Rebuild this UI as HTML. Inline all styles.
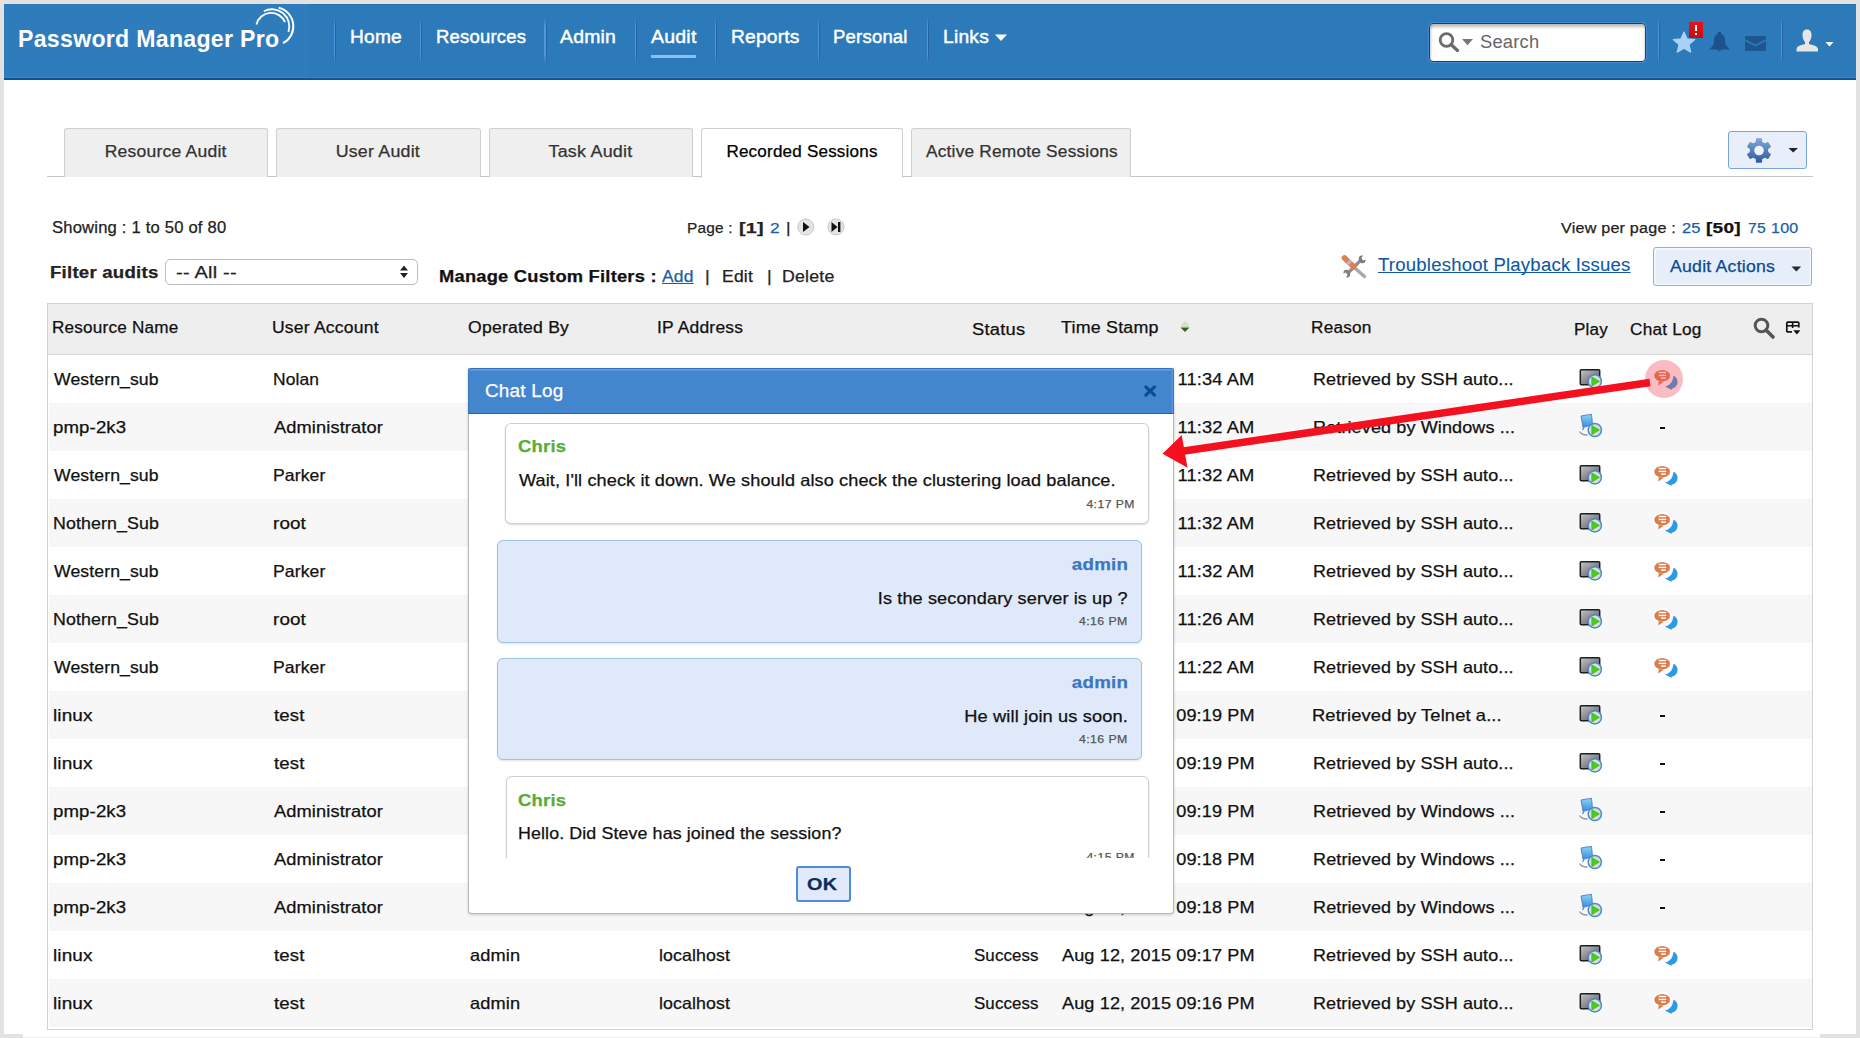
<!DOCTYPE html>
<html><head><meta charset="utf-8"><title>Password Manager Pro - Recorded Sessions</title>
<style>
html,body{margin:0;padding:0;width:1860px;height:1038px;overflow:hidden;position:relative;font-family:"Liberation Sans", sans-serif;}
div{-webkit-text-stroke:0.25px currentColor;}
</style></head><body>
<div style="position:absolute;left:0;top:0;width:1860px;height:1038px;background:#e2e2e2"></div>
<div style="position:absolute;left:4px;top:4px;width:1852px;height:1033px;background:#fff"></div><div style="position:absolute;left:0;top:1034px;width:23px;height:4px;background:#e2e2e2"></div><div style="position:absolute;left:1820px;top:1034px;width:40px;height:4px;background:#e2e2e2"></div><div style="position:absolute;left:23px;top:1037px;width:1797px;height:1px;background:#eeeeee"></div>
<div style="position:absolute;left:4px;top:4px;width:1852px;height:76px;background:#2c7ab9;border-top:1px solid #2470b0;box-sizing:border-box"></div>
<div style="position:absolute;left:4px;top:4px;width:305px;height:73px;background:#2f7cbd"></div>
<div style="position:absolute;left:4px;top:77px;width:1852px;height:1px;background:#3a84cf"></div>
<div style="position:absolute;left:4px;top:78px;width:1852px;height:2px;background:#0f5299"></div>
<svg style="position:absolute;left:245px;top:2px" width="60" height="50" viewBox="0 0 60 50">
<path d="M11.5 22.5 A 15 15 0 0 1 40 20.2" stroke="#fff" stroke-width="1.9" fill="none"/>
<path d="M18.8 9.3 A 17.3 17.3 0 0 1 43.4 30" stroke="#fff" stroke-width="1.8" fill="none"/>
<path d="M33.7 5.8 A 19 19 0 0 1 38 41.2" stroke="#fff" stroke-width="2" fill="none"/>
</svg>
<div style="position:absolute;left:333.5px;top:17px;width:1.5px;height:47px;background:linear-gradient(#2c7ab9,#4e96e2 22%,#4e96e2 78%,#2c7ab9)"></div>
<div style="position:absolute;left:335px;top:17px;width:1px;height:47px;background:linear-gradient(#2c7ab9,#23649e 22%,#23649e 78%,#2c7ab9)"></div>
<div style="position:absolute;left:419.5px;top:17px;width:1.5px;height:47px;background:linear-gradient(#2c7ab9,#4e96e2 22%,#4e96e2 78%,#2c7ab9)"></div>
<div style="position:absolute;left:421px;top:17px;width:1px;height:47px;background:linear-gradient(#2c7ab9,#23649e 22%,#23649e 78%,#2c7ab9)"></div>
<div style="position:absolute;left:544.0px;top:17px;width:1.5px;height:47px;background:linear-gradient(#2c7ab9,#4e96e2 22%,#4e96e2 78%,#2c7ab9)"></div>
<div style="position:absolute;left:545.5px;top:17px;width:1px;height:47px;background:linear-gradient(#2c7ab9,#23649e 22%,#23649e 78%,#2c7ab9)"></div>
<div style="position:absolute;left:634.5px;top:17px;width:1.5px;height:47px;background:linear-gradient(#2c7ab9,#4e96e2 22%,#4e96e2 78%,#2c7ab9)"></div>
<div style="position:absolute;left:636px;top:17px;width:1px;height:47px;background:linear-gradient(#2c7ab9,#23649e 22%,#23649e 78%,#2c7ab9)"></div>
<div style="position:absolute;left:714.5px;top:17px;width:1.5px;height:47px;background:linear-gradient(#2c7ab9,#4e96e2 22%,#4e96e2 78%,#2c7ab9)"></div>
<div style="position:absolute;left:716px;top:17px;width:1px;height:47px;background:linear-gradient(#2c7ab9,#23649e 22%,#23649e 78%,#2c7ab9)"></div>
<div style="position:absolute;left:817.5px;top:17px;width:1.5px;height:47px;background:linear-gradient(#2c7ab9,#4e96e2 22%,#4e96e2 78%,#2c7ab9)"></div>
<div style="position:absolute;left:819px;top:17px;width:1px;height:47px;background:linear-gradient(#2c7ab9,#23649e 22%,#23649e 78%,#2c7ab9)"></div>
<div style="position:absolute;left:926.5px;top:17px;width:1.5px;height:47px;background:linear-gradient(#2c7ab9,#4e96e2 22%,#4e96e2 78%,#2c7ab9)"></div>
<div style="position:absolute;left:928px;top:17px;width:1px;height:47px;background:linear-gradient(#2c7ab9,#23649e 22%,#23649e 78%,#2c7ab9)"></div>
<div style="position:absolute;left:651px;top:55px;width:45px;height:3px;background:#86bff0"></div>
<svg style="position:absolute;left:995px;top:34px" width="12" height="8"><path d="M0 0.5 L12 0.5 L6 7 Z" fill="#fff"/></svg>
<div style="position:absolute;left:1428.5px;top:22.5px;width:217.5px;height:39.5px;box-sizing:border-box;border:1.8px solid #15416e;border-radius:4px;background:#fff;box-shadow:inset 0 3px 3px rgba(0,0,0,0.26), inset 2px 0 2px rgba(0,0,0,0.06), 0 0 0 1px rgba(80,150,220,0.6)"></div>
<svg style="position:absolute;left:1436px;top:30px" width="40" height="22">
<circle cx="10.5" cy="10" r="6.3" stroke="#6a6a6a" stroke-width="2.8" fill="none"/>
<path d="M15 14.5 L21.5 20.5" stroke="#6a6a6a" stroke-width="3.2" stroke-linecap="round"/>
<path d="M26 9 L37 9 L31.5 15.3 Z" fill="#777"/>
</svg>
<div style="position:absolute;left:1657.5px;top:17px;width:1.5px;height:47px;background:linear-gradient(#2c7ab9,#4e96e2 22%,#4e96e2 78%,#2c7ab9)"></div>
<div style="position:absolute;left:1659px;top:17px;width:1px;height:47px;background:linear-gradient(#2c7ab9,#23649e 22%,#23649e 78%,#2c7ab9)"></div>
<div style="position:absolute;left:1780.5px;top:17px;width:1.5px;height:47px;background:linear-gradient(#2c7ab9,#4e96e2 22%,#4e96e2 78%,#2c7ab9)"></div>
<div style="position:absolute;left:1782px;top:17px;width:1px;height:47px;background:linear-gradient(#2c7ab9,#23649e 22%,#23649e 78%,#2c7ab9)"></div>
<svg style="position:absolute;left:1672px;top:31px" width="24" height="23" viewBox="0 0 24 23">
<path d="M12 1 L15.2 7.9 L22.8 8.6 L17 13.6 L18.8 21.2 L12 17.2 L5.2 21.2 L7 13.6 L1.2 8.6 L8.8 7.9 Z" fill="#a9d1f6" stroke="#a9d1f6" stroke-width="1.2" stroke-linejoin="round"/></svg>
<div style="position:absolute;left:1689px;top:22px;width:14px;height:16px;background:linear-gradient(#e8141a,#c40d0d)"></div>
<div style="position:absolute;left:1694.5px;top:25px;width:2.5px;height:6px;background:#fff"></div>
<div style="position:absolute;left:1694.5px;top:32.5px;width:2.5px;height:2px;background:#fff"></div>
<svg style="position:absolute;left:1708px;top:31px" width="23" height="21" viewBox="0 0 23 21">
<circle cx="11.5" cy="2.5" r="1.8" fill="#1a4f86"/>
<path d="M11.5 3 C 7 3, 6 6, 6 10 C 6 14, 4 16, 1 18.5 L22 18.5 C 19 16, 17 14, 17 10 C 17 6, 16 3, 11.5 3 Z" fill="#1c5289"/>
<path d="M9 18.5 L14 18.5 L11.5 20.5 Z" fill="#1c5289"/></svg>
<svg style="position:absolute;left:1745px;top:36px" width="21" height="15" viewBox="0 0 21 15">
<rect x="0" y="0" width="21" height="15" fill="#1f5690"/>
<path d="M0 4 L10.5 9.5 L21 4" stroke="#2c7ab9" stroke-width="1.6" fill="none"/></svg>
<svg style="position:absolute;left:1795px;top:28px" width="40" height="25" viewBox="0 0 40 25">
<path d="M12 1.5 C 8.5 1.5, 7.5 4, 7.5 7 C 7.5 10, 8.5 12.5, 10 14 L 10 16 C 6 17, 2 18, 1.5 21 L 1.5 23.5 L 23 23.5 L 23 21 C 22.5 18, 18 17, 14 16 L 14 14 C 15.5 12.5, 16.5 10, 16.5 7 C 16.5 4, 15.5 1.5, 12 1.5 Z" fill="#e6e6e6"/>
<path d="M30.5 14 L38.5 14 L34.5 18.5 Z" fill="#fff"/></svg>
<div style="position:absolute;left:47px;top:176px;width:1766px;height:1.2px;background:#c6c6c6"></div>
<div style="position:absolute;left:64px;top:128px;width:204px;height:49px;box-sizing:border-box;border:1px solid #cfcfcf;border-bottom:none;border-radius:3px 3px 0 0;background:#efefef"></div>
<div style="position:absolute;left:276px;top:128px;width:204.5px;height:49px;box-sizing:border-box;border:1px solid #cfcfcf;border-bottom:none;border-radius:3px 3px 0 0;background:#efefef"></div>
<div style="position:absolute;left:489px;top:128px;width:203.5px;height:49px;box-sizing:border-box;border:1px solid #cfcfcf;border-bottom:none;border-radius:3px 3px 0 0;background:#efefef"></div>
<div style="position:absolute;left:701px;top:128px;width:202px;height:50px;box-sizing:border-box;border:1px solid #cfcfcf;border-bottom:none;border-radius:3px 3px 0 0;background:#fff"></div>
<div style="position:absolute;left:911px;top:128px;width:220px;height:49px;box-sizing:border-box;border:1px solid #cfcfcf;border-bottom:none;border-radius:3px 3px 0 0;background:#efefef"></div>
<div style="position:absolute;left:1728px;top:131px;width:79px;height:38px;box-sizing:border-box;border:1px solid #78a6dc;border-radius:3px;background:#e8effa"></div>
<svg style="position:absolute;left:1745px;top:138px" width="56" height="26" viewBox="0 0 56 26">
<defs><linearGradient id="gg" x1="0" y1="0" x2="0" y2="1"><stop offset="0" stop-color="#7ea6d8"/><stop offset="1" stop-color="#2f5c9c"/></linearGradient></defs>
<path d="M11.49 4.28 L11.75 0.92 L16.25 0.92 L16.51 4.28 L19.87 6.21 L22.91 4.76 L25.16 8.66 L22.38 10.57 L22.38 14.43 L25.16 16.34 L22.91 20.24 L19.87 18.79 L16.51 20.72 L16.25 24.08 L11.75 24.08 L11.49 20.72 L8.13 18.79 L5.09 20.24 L2.84 16.34 L5.62 14.43 L5.62 10.57 L2.84 8.66 L5.09 4.76 L8.13 6.21 Z" fill="url(#gg)" stroke="url(#gg)" stroke-width="1.5" stroke-linejoin="round"/>
<circle cx="14" cy="12.5" r="4.8" fill="#eef3fb"/>
<path d="M43.5 10 L53 10 L48.2 14.6 Z" fill="#222"/></svg>
<div style="position:absolute;left:164.5px;top:259px;width:253px;height:25.5px;box-sizing:border-box;border:1px solid #bdbdbd;border-radius:5px;background:#fff"></div>
<svg style="position:absolute;left:399px;top:264px" width="10" height="16"><path d="M1 6.5 L5 1.5 L9 6.5 Z" fill="#222"/><path d="M1 9 L9 9 L5 14 Z" fill="#222"/></svg>
<svg style="position:absolute;left:795px;top:217px" width="52" height="20">
<circle cx="10.8" cy="10" r="8" fill="#e4e4e4" stroke="#c9c9c9" stroke-width="1"/>
<path d="M8 5 L14.5 10 L8 15 Z" fill="#111"/>
<circle cx="41" cy="10" r="8" fill="#e4e4e4" stroke="#c9c9c9" stroke-width="1"/>
<path d="M36.5 5 L42.5 10 L36.5 15 Z" fill="#111"/>
<rect x="43" y="5" width="2.4" height="10" fill="#111"/>
</svg>
<svg style="position:absolute;left:1336px;top:250px" width="36" height="34" viewBox="0 0 36 34">
<path d="M11.5 23.5 L25.5 9.5" stroke="#8f8f8f" stroke-width="3.2"/>
<path d="M23 10 C 22 7, 24 5, 27 5.5 L 25.5 8 L 27 10.5 L 29.5 9.5 C 30 12, 28 14, 25 13 Z" fill="#7c7c7c"/>
<path d="M14 23 C 15 26, 13 28, 10 27.5 L 11.5 25 L 10 22.5 L 7.5 23.5 C 7 21, 9 19, 12 20 Z" fill="#808080"/>
<path d="M17 16.5 L28.5 26.5" stroke="#a8a8a8" stroke-width="3.4" stroke-linecap="round"/>
<path d="M8.5 8 L17.5 16.5" stroke="#e27d52" stroke-width="5.6" stroke-linecap="round"/>
<path d="M11.8 11.2 L14.2 13.5" stroke="#b9b9b9" stroke-width="5.6"/>
</svg>
<div style="position:absolute;left:1652.5px;top:247px;width:159px;height:39px;box-sizing:border-box;border:1.3px solid #8cb1de;border-radius:3px;background:#e6eefa;box-shadow:inset 0 0 0 1.5px rgba(255,255,255,0.6)"></div>
<svg style="position:absolute;left:1791px;top:265.5px" width="12" height="7"><path d="M0.5 0.5 L10.2 0.5 L5.35 5.5 Z" fill="#2a2a2a"/></svg>
<div style="position:absolute;left:47px;top:302.5px;width:1766px;height:727px;box-sizing:border-box;border:1.5px solid #d3d3d3;background:#fff"></div>
<div style="position:absolute;left:48px;top:304px;width:1764px;height:50px;background:#eeeeee;border-bottom:1.5px solid #d6d6d6"></div>
<svg style="position:absolute;left:1178px;top:320px" width="14" height="16"><path d="M3 5.5 L11 5.5 L7 1 Z" fill="#d0e0c8"/><path d="M2.5 7.5 L11.5 7.5 L7 12 Z" fill="#3d5f1e"/><rect x="3" y="6.3" width="8" height="0.8" fill="#b7d2a3"/></svg>
<svg style="position:absolute;left:1750px;top:315px" width="50" height="26">
<circle cx="11.5" cy="10.5" r="6.3" stroke="#555" stroke-width="3" fill="none"/>
<path d="M16 15 L23 22" stroke="#555" stroke-width="3.6" stroke-linecap="round"/>
<path d="M36.8 17 L36.8 8.2 Q36.8 7.2 37.8 7.2 L47.8 7.2 Q48.8 7.2 48.8 8.2 L48.8 12.5" fill="none" stroke="#111" stroke-width="1.7"/>
<path d="M36.8 10.8 L48.8 10.8 M42.6 7.2 L42.6 13" stroke="#111" stroke-width="1.6"/>
<path d="M36.8 16.9 L42 16.9" stroke="#111" stroke-width="1.7"/>
<path d="M43.3 15.2 L50.5 15.2 L46.9 19.5 Z" fill="#111"/>
</svg>
<svg style="position:absolute;left:1578px;top:364px" width="26" height="26" viewBox="0 0 26 26">
<defs><linearGradient id="sg0" x1="0" y1="0" x2="1" y2="1"><stop offset="0" stop-color="#c8c8c8"/><stop offset="1" stop-color="#505050"/></linearGradient></defs>
<rect x="2.3" y="5.7" width="19.4" height="15" rx="1" fill="url(#sg0)" stroke="#1e1e1e" stroke-width="1.5"/>
<circle cx="16.8" cy="17.4" r="6.6" fill="#dcdcdc" stroke="#4a88d0" stroke-width="1.5"/>
<path d="M13.8 12.8 L21.4 17.4 L13.8 22 Z" fill="#43d11c" stroke="#2fa80f" stroke-width="0.6" stroke-linejoin="round"/></svg>
<svg style="position:absolute;left:1650px;top:364px" width="30" height="26" viewBox="0 0 30 26">
<path d="M23.5 11.8 C 28 13.5, 29 19.5, 25.5 22.8 C 24.5 23.8, 23 24.5, 21.5 24.8 L 21.8 26 L 15 22.6 C 18.5 21.8, 21.5 19.5, 22.3 16.5 C 22.8 15, 23.2 13.5, 23.5 11.8 Z" fill="#2b9be2"/>
<ellipse cx="12.2" cy="11.7" rx="8.8" ry="6.6" fill="#dc7d4d" stroke="#fff" stroke-width="1.8"/>
<path d="M8.8 17 L8.2 21.5 L13.8 17.8 Z" fill="#dc7d4d"/>
<rect x="8.7" y="7.8" width="7.4" height="1.4" fill="#fff"/><rect x="8.7" y="10.7" width="7.4" height="1.4" fill="#fff"/><rect x="11" y="13.4" width="4.8" height="1.4" fill="#fff"/>
</svg>
<div style="position:absolute;left:48.5px;top:403px;width:1763px;height:48px;background:#f7f7f7"></div>
<svg style="position:absolute;left:1578px;top:412px" width="26" height="26" viewBox="0 0 26 26">
<defs><linearGradient id="wg1" x1="0" y1="0" x2="0" y2="1"><stop offset="0" stop-color="#8cd0fa"/><stop offset="1" stop-color="#2e90e0"/></linearGradient></defs>
<path d="M3 4 L13.5 2.3 L14.5 12.5 L5 15.5 Z" fill="url(#wg1)" stroke="#4a7fc0" stroke-width="0.9"/>
<path d="M6 15.5 L4.5 18" stroke="#6a8fc0" stroke-width="1.4"/>
<path d="M1.8 19.5 C 2.5 22, 5.5 23, 9.5 23" stroke="#8a9ab0" stroke-width="1.3" fill="none"/>
<circle cx="16.8" cy="18" r="6.6" fill="#dcdcdc" stroke="#4a88d0" stroke-width="1.5"/>
<path d="M13.8 13.4 L21.4 18 L13.8 22.6 Z" fill="#43d11c" stroke="#2fa80f" stroke-width="0.6" stroke-linejoin="round"/></svg>
<div style="position:absolute;left:1659.7px;top:427px;width:5.8px;height:2px;background:#111"></div>
<svg style="position:absolute;left:1578px;top:460px" width="26" height="26" viewBox="0 0 26 26">
<defs><linearGradient id="sg2" x1="0" y1="0" x2="1" y2="1"><stop offset="0" stop-color="#c8c8c8"/><stop offset="1" stop-color="#505050"/></linearGradient></defs>
<rect x="2.3" y="5.7" width="19.4" height="15" rx="1" fill="url(#sg2)" stroke="#1e1e1e" stroke-width="1.5"/>
<circle cx="16.8" cy="17.4" r="6.6" fill="#dcdcdc" stroke="#4a88d0" stroke-width="1.5"/>
<path d="M13.8 12.8 L21.4 17.4 L13.8 22 Z" fill="#43d11c" stroke="#2fa80f" stroke-width="0.6" stroke-linejoin="round"/></svg>
<svg style="position:absolute;left:1650px;top:460px" width="30" height="26" viewBox="0 0 30 26">
<path d="M23.5 11.8 C 28 13.5, 29 19.5, 25.5 22.8 C 24.5 23.8, 23 24.5, 21.5 24.8 L 21.8 26 L 15 22.6 C 18.5 21.8, 21.5 19.5, 22.3 16.5 C 22.8 15, 23.2 13.5, 23.5 11.8 Z" fill="#2b9be2"/>
<ellipse cx="12.2" cy="11.7" rx="8.8" ry="6.6" fill="#dc7d4d" stroke="#fff" stroke-width="1.8"/>
<path d="M8.8 17 L8.2 21.5 L13.8 17.8 Z" fill="#dc7d4d"/>
<rect x="8.7" y="7.8" width="7.4" height="1.4" fill="#fff"/><rect x="8.7" y="10.7" width="7.4" height="1.4" fill="#fff"/><rect x="11" y="13.4" width="4.8" height="1.4" fill="#fff"/>
</svg>
<div style="position:absolute;left:48.5px;top:499px;width:1763px;height:48px;background:#f7f7f7"></div>
<svg style="position:absolute;left:1578px;top:508px" width="26" height="26" viewBox="0 0 26 26">
<defs><linearGradient id="sg3" x1="0" y1="0" x2="1" y2="1"><stop offset="0" stop-color="#c8c8c8"/><stop offset="1" stop-color="#505050"/></linearGradient></defs>
<rect x="2.3" y="5.7" width="19.4" height="15" rx="1" fill="url(#sg3)" stroke="#1e1e1e" stroke-width="1.5"/>
<circle cx="16.8" cy="17.4" r="6.6" fill="#dcdcdc" stroke="#4a88d0" stroke-width="1.5"/>
<path d="M13.8 12.8 L21.4 17.4 L13.8 22 Z" fill="#43d11c" stroke="#2fa80f" stroke-width="0.6" stroke-linejoin="round"/></svg>
<svg style="position:absolute;left:1650px;top:508px" width="30" height="26" viewBox="0 0 30 26">
<path d="M23.5 11.8 C 28 13.5, 29 19.5, 25.5 22.8 C 24.5 23.8, 23 24.5, 21.5 24.8 L 21.8 26 L 15 22.6 C 18.5 21.8, 21.5 19.5, 22.3 16.5 C 22.8 15, 23.2 13.5, 23.5 11.8 Z" fill="#2b9be2"/>
<ellipse cx="12.2" cy="11.7" rx="8.8" ry="6.6" fill="#dc7d4d" stroke="#fff" stroke-width="1.8"/>
<path d="M8.8 17 L8.2 21.5 L13.8 17.8 Z" fill="#dc7d4d"/>
<rect x="8.7" y="7.8" width="7.4" height="1.4" fill="#fff"/><rect x="8.7" y="10.7" width="7.4" height="1.4" fill="#fff"/><rect x="11" y="13.4" width="4.8" height="1.4" fill="#fff"/>
</svg>
<svg style="position:absolute;left:1578px;top:556px" width="26" height="26" viewBox="0 0 26 26">
<defs><linearGradient id="sg4" x1="0" y1="0" x2="1" y2="1"><stop offset="0" stop-color="#c8c8c8"/><stop offset="1" stop-color="#505050"/></linearGradient></defs>
<rect x="2.3" y="5.7" width="19.4" height="15" rx="1" fill="url(#sg4)" stroke="#1e1e1e" stroke-width="1.5"/>
<circle cx="16.8" cy="17.4" r="6.6" fill="#dcdcdc" stroke="#4a88d0" stroke-width="1.5"/>
<path d="M13.8 12.8 L21.4 17.4 L13.8 22 Z" fill="#43d11c" stroke="#2fa80f" stroke-width="0.6" stroke-linejoin="round"/></svg>
<svg style="position:absolute;left:1650px;top:556px" width="30" height="26" viewBox="0 0 30 26">
<path d="M23.5 11.8 C 28 13.5, 29 19.5, 25.5 22.8 C 24.5 23.8, 23 24.5, 21.5 24.8 L 21.8 26 L 15 22.6 C 18.5 21.8, 21.5 19.5, 22.3 16.5 C 22.8 15, 23.2 13.5, 23.5 11.8 Z" fill="#2b9be2"/>
<ellipse cx="12.2" cy="11.7" rx="8.8" ry="6.6" fill="#dc7d4d" stroke="#fff" stroke-width="1.8"/>
<path d="M8.8 17 L8.2 21.5 L13.8 17.8 Z" fill="#dc7d4d"/>
<rect x="8.7" y="7.8" width="7.4" height="1.4" fill="#fff"/><rect x="8.7" y="10.7" width="7.4" height="1.4" fill="#fff"/><rect x="11" y="13.4" width="4.8" height="1.4" fill="#fff"/>
</svg>
<div style="position:absolute;left:48.5px;top:595px;width:1763px;height:48px;background:#f7f7f7"></div>
<svg style="position:absolute;left:1578px;top:604px" width="26" height="26" viewBox="0 0 26 26">
<defs><linearGradient id="sg5" x1="0" y1="0" x2="1" y2="1"><stop offset="0" stop-color="#c8c8c8"/><stop offset="1" stop-color="#505050"/></linearGradient></defs>
<rect x="2.3" y="5.7" width="19.4" height="15" rx="1" fill="url(#sg5)" stroke="#1e1e1e" stroke-width="1.5"/>
<circle cx="16.8" cy="17.4" r="6.6" fill="#dcdcdc" stroke="#4a88d0" stroke-width="1.5"/>
<path d="M13.8 12.8 L21.4 17.4 L13.8 22 Z" fill="#43d11c" stroke="#2fa80f" stroke-width="0.6" stroke-linejoin="round"/></svg>
<svg style="position:absolute;left:1650px;top:604px" width="30" height="26" viewBox="0 0 30 26">
<path d="M23.5 11.8 C 28 13.5, 29 19.5, 25.5 22.8 C 24.5 23.8, 23 24.5, 21.5 24.8 L 21.8 26 L 15 22.6 C 18.5 21.8, 21.5 19.5, 22.3 16.5 C 22.8 15, 23.2 13.5, 23.5 11.8 Z" fill="#2b9be2"/>
<ellipse cx="12.2" cy="11.7" rx="8.8" ry="6.6" fill="#dc7d4d" stroke="#fff" stroke-width="1.8"/>
<path d="M8.8 17 L8.2 21.5 L13.8 17.8 Z" fill="#dc7d4d"/>
<rect x="8.7" y="7.8" width="7.4" height="1.4" fill="#fff"/><rect x="8.7" y="10.7" width="7.4" height="1.4" fill="#fff"/><rect x="11" y="13.4" width="4.8" height="1.4" fill="#fff"/>
</svg>
<svg style="position:absolute;left:1578px;top:652px" width="26" height="26" viewBox="0 0 26 26">
<defs><linearGradient id="sg6" x1="0" y1="0" x2="1" y2="1"><stop offset="0" stop-color="#c8c8c8"/><stop offset="1" stop-color="#505050"/></linearGradient></defs>
<rect x="2.3" y="5.7" width="19.4" height="15" rx="1" fill="url(#sg6)" stroke="#1e1e1e" stroke-width="1.5"/>
<circle cx="16.8" cy="17.4" r="6.6" fill="#dcdcdc" stroke="#4a88d0" stroke-width="1.5"/>
<path d="M13.8 12.8 L21.4 17.4 L13.8 22 Z" fill="#43d11c" stroke="#2fa80f" stroke-width="0.6" stroke-linejoin="round"/></svg>
<svg style="position:absolute;left:1650px;top:652px" width="30" height="26" viewBox="0 0 30 26">
<path d="M23.5 11.8 C 28 13.5, 29 19.5, 25.5 22.8 C 24.5 23.8, 23 24.5, 21.5 24.8 L 21.8 26 L 15 22.6 C 18.5 21.8, 21.5 19.5, 22.3 16.5 C 22.8 15, 23.2 13.5, 23.5 11.8 Z" fill="#2b9be2"/>
<ellipse cx="12.2" cy="11.7" rx="8.8" ry="6.6" fill="#dc7d4d" stroke="#fff" stroke-width="1.8"/>
<path d="M8.8 17 L8.2 21.5 L13.8 17.8 Z" fill="#dc7d4d"/>
<rect x="8.7" y="7.8" width="7.4" height="1.4" fill="#fff"/><rect x="8.7" y="10.7" width="7.4" height="1.4" fill="#fff"/><rect x="11" y="13.4" width="4.8" height="1.4" fill="#fff"/>
</svg>
<div style="position:absolute;left:48.5px;top:691px;width:1763px;height:48px;background:#f7f7f7"></div>
<svg style="position:absolute;left:1578px;top:700px" width="26" height="26" viewBox="0 0 26 26">
<defs><linearGradient id="sg7" x1="0" y1="0" x2="1" y2="1"><stop offset="0" stop-color="#c8c8c8"/><stop offset="1" stop-color="#505050"/></linearGradient></defs>
<rect x="2.3" y="5.7" width="19.4" height="15" rx="1" fill="url(#sg7)" stroke="#1e1e1e" stroke-width="1.5"/>
<circle cx="16.8" cy="17.4" r="6.6" fill="#dcdcdc" stroke="#4a88d0" stroke-width="1.5"/>
<path d="M13.8 12.8 L21.4 17.4 L13.8 22 Z" fill="#43d11c" stroke="#2fa80f" stroke-width="0.6" stroke-linejoin="round"/></svg>
<div style="position:absolute;left:1659.7px;top:715px;width:5.8px;height:2px;background:#111"></div>
<svg style="position:absolute;left:1578px;top:748px" width="26" height="26" viewBox="0 0 26 26">
<defs><linearGradient id="sg8" x1="0" y1="0" x2="1" y2="1"><stop offset="0" stop-color="#c8c8c8"/><stop offset="1" stop-color="#505050"/></linearGradient></defs>
<rect x="2.3" y="5.7" width="19.4" height="15" rx="1" fill="url(#sg8)" stroke="#1e1e1e" stroke-width="1.5"/>
<circle cx="16.8" cy="17.4" r="6.6" fill="#dcdcdc" stroke="#4a88d0" stroke-width="1.5"/>
<path d="M13.8 12.8 L21.4 17.4 L13.8 22 Z" fill="#43d11c" stroke="#2fa80f" stroke-width="0.6" stroke-linejoin="round"/></svg>
<div style="position:absolute;left:1659.7px;top:763px;width:5.8px;height:2px;background:#111"></div>
<div style="position:absolute;left:48.5px;top:787px;width:1763px;height:48px;background:#f7f7f7"></div>
<svg style="position:absolute;left:1578px;top:796px" width="26" height="26" viewBox="0 0 26 26">
<defs><linearGradient id="wg9" x1="0" y1="0" x2="0" y2="1"><stop offset="0" stop-color="#8cd0fa"/><stop offset="1" stop-color="#2e90e0"/></linearGradient></defs>
<path d="M3 4 L13.5 2.3 L14.5 12.5 L5 15.5 Z" fill="url(#wg9)" stroke="#4a7fc0" stroke-width="0.9"/>
<path d="M6 15.5 L4.5 18" stroke="#6a8fc0" stroke-width="1.4"/>
<path d="M1.8 19.5 C 2.5 22, 5.5 23, 9.5 23" stroke="#8a9ab0" stroke-width="1.3" fill="none"/>
<circle cx="16.8" cy="18" r="6.6" fill="#dcdcdc" stroke="#4a88d0" stroke-width="1.5"/>
<path d="M13.8 13.4 L21.4 18 L13.8 22.6 Z" fill="#43d11c" stroke="#2fa80f" stroke-width="0.6" stroke-linejoin="round"/></svg>
<div style="position:absolute;left:1659.7px;top:811px;width:5.8px;height:2px;background:#111"></div>
<svg style="position:absolute;left:1578px;top:844px" width="26" height="26" viewBox="0 0 26 26">
<defs><linearGradient id="wg10" x1="0" y1="0" x2="0" y2="1"><stop offset="0" stop-color="#8cd0fa"/><stop offset="1" stop-color="#2e90e0"/></linearGradient></defs>
<path d="M3 4 L13.5 2.3 L14.5 12.5 L5 15.5 Z" fill="url(#wg10)" stroke="#4a7fc0" stroke-width="0.9"/>
<path d="M6 15.5 L4.5 18" stroke="#6a8fc0" stroke-width="1.4"/>
<path d="M1.8 19.5 C 2.5 22, 5.5 23, 9.5 23" stroke="#8a9ab0" stroke-width="1.3" fill="none"/>
<circle cx="16.8" cy="18" r="6.6" fill="#dcdcdc" stroke="#4a88d0" stroke-width="1.5"/>
<path d="M13.8 13.4 L21.4 18 L13.8 22.6 Z" fill="#43d11c" stroke="#2fa80f" stroke-width="0.6" stroke-linejoin="round"/></svg>
<div style="position:absolute;left:1659.7px;top:859px;width:5.8px;height:2px;background:#111"></div>
<div style="position:absolute;left:48.5px;top:883px;width:1763px;height:48px;background:#f7f7f7"></div>
<svg style="position:absolute;left:1578px;top:892px" width="26" height="26" viewBox="0 0 26 26">
<defs><linearGradient id="wg11" x1="0" y1="0" x2="0" y2="1"><stop offset="0" stop-color="#8cd0fa"/><stop offset="1" stop-color="#2e90e0"/></linearGradient></defs>
<path d="M3 4 L13.5 2.3 L14.5 12.5 L5 15.5 Z" fill="url(#wg11)" stroke="#4a7fc0" stroke-width="0.9"/>
<path d="M6 15.5 L4.5 18" stroke="#6a8fc0" stroke-width="1.4"/>
<path d="M1.8 19.5 C 2.5 22, 5.5 23, 9.5 23" stroke="#8a9ab0" stroke-width="1.3" fill="none"/>
<circle cx="16.8" cy="18" r="6.6" fill="#dcdcdc" stroke="#4a88d0" stroke-width="1.5"/>
<path d="M13.8 13.4 L21.4 18 L13.8 22.6 Z" fill="#43d11c" stroke="#2fa80f" stroke-width="0.6" stroke-linejoin="round"/></svg>
<div style="position:absolute;left:1659.7px;top:907px;width:5.8px;height:2px;background:#111"></div>
<svg style="position:absolute;left:1578px;top:940px" width="26" height="26" viewBox="0 0 26 26">
<defs><linearGradient id="sg12" x1="0" y1="0" x2="1" y2="1"><stop offset="0" stop-color="#c8c8c8"/><stop offset="1" stop-color="#505050"/></linearGradient></defs>
<rect x="2.3" y="5.7" width="19.4" height="15" rx="1" fill="url(#sg12)" stroke="#1e1e1e" stroke-width="1.5"/>
<circle cx="16.8" cy="17.4" r="6.6" fill="#dcdcdc" stroke="#4a88d0" stroke-width="1.5"/>
<path d="M13.8 12.8 L21.4 17.4 L13.8 22 Z" fill="#43d11c" stroke="#2fa80f" stroke-width="0.6" stroke-linejoin="round"/></svg>
<svg style="position:absolute;left:1650px;top:940px" width="30" height="26" viewBox="0 0 30 26">
<path d="M23.5 11.8 C 28 13.5, 29 19.5, 25.5 22.8 C 24.5 23.8, 23 24.5, 21.5 24.8 L 21.8 26 L 15 22.6 C 18.5 21.8, 21.5 19.5, 22.3 16.5 C 22.8 15, 23.2 13.5, 23.5 11.8 Z" fill="#2b9be2"/>
<ellipse cx="12.2" cy="11.7" rx="8.8" ry="6.6" fill="#dc7d4d" stroke="#fff" stroke-width="1.8"/>
<path d="M8.8 17 L8.2 21.5 L13.8 17.8 Z" fill="#dc7d4d"/>
<rect x="8.7" y="7.8" width="7.4" height="1.4" fill="#fff"/><rect x="8.7" y="10.7" width="7.4" height="1.4" fill="#fff"/><rect x="11" y="13.4" width="4.8" height="1.4" fill="#fff"/>
</svg>
<div style="position:absolute;left:48.5px;top:979px;width:1763px;height:48px;background:#f7f7f7"></div>
<svg style="position:absolute;left:1578px;top:988px" width="26" height="26" viewBox="0 0 26 26">
<defs><linearGradient id="sg13" x1="0" y1="0" x2="1" y2="1"><stop offset="0" stop-color="#c8c8c8"/><stop offset="1" stop-color="#505050"/></linearGradient></defs>
<rect x="2.3" y="5.7" width="19.4" height="15" rx="1" fill="url(#sg13)" stroke="#1e1e1e" stroke-width="1.5"/>
<circle cx="16.8" cy="17.4" r="6.6" fill="#dcdcdc" stroke="#4a88d0" stroke-width="1.5"/>
<path d="M13.8 12.8 L21.4 17.4 L13.8 22 Z" fill="#43d11c" stroke="#2fa80f" stroke-width="0.6" stroke-linejoin="round"/></svg>
<svg style="position:absolute;left:1650px;top:988px" width="30" height="26" viewBox="0 0 30 26">
<path d="M23.5 11.8 C 28 13.5, 29 19.5, 25.5 22.8 C 24.5 23.8, 23 24.5, 21.5 24.8 L 21.8 26 L 15 22.6 C 18.5 21.8, 21.5 19.5, 22.3 16.5 C 22.8 15, 23.2 13.5, 23.5 11.8 Z" fill="#2b9be2"/>
<ellipse cx="12.2" cy="11.7" rx="8.8" ry="6.6" fill="#dc7d4d" stroke="#fff" stroke-width="1.8"/>
<path d="M8.8 17 L8.2 21.5 L13.8 17.8 Z" fill="#dc7d4d"/>
<rect x="8.7" y="7.8" width="7.4" height="1.4" fill="#fff"/><rect x="8.7" y="10.7" width="7.4" height="1.4" fill="#fff"/><rect x="11" y="13.4" width="4.8" height="1.4" fill="#fff"/>
</svg>
<div style="position:absolute;left:1645px;top:360px;width:38px;height:38px;border-radius:50%;background:rgba(240,60,80,0.35);z-index:6"></div>
<div style="position:absolute;left:468px;top:368px;width:706px;height:545.5px;box-sizing:border-box;border:1.5px solid #b9b9b9;border-top:none;border-radius:0 0 4px 4px;background:#fff;box-shadow:0 1px 3px rgba(0,0,0,0.18);z-index:10"></div>
<div style="position:absolute;left:468px;top:368px;width:706px;height:45.5px;box-sizing:border-box;background:#4386cd;border-top:1.2px solid #3570b6;border-bottom:1.5px solid #2a62a6;border-left:1px solid #3b78c0;border-right:1px solid #3b78c0;border-radius:3px 3px 0 0;box-shadow:inset 0 1.5px 0 #62a0e6, inset -1.5px 0 0 #5596dc;z-index:11"></div>
<svg style="position:absolute;left:1143px;top:384px;z-index:12" width="14" height="14"><path d="M2.8 2.8 L11.5 11.2 M11.5 2.8 L2.8 11.2" stroke="#0e4a8e" stroke-width="3" stroke-linecap="round"/></svg>
<div style="position:absolute;left:470px;top:414px;width:702px;height:444px;overflow:hidden;z-index:12"><div style="position:absolute;left:35px;top:8.5px;width:643.5px;height:101.5px;box-sizing:border-box;border:1px solid #cfcfcf;border-radius:6px;background:#fff;box-shadow:0 1px 2px rgba(0,0,0,0.15)"></div><div style="position:absolute;left:27px;top:126px;width:644.5px;height:102.5px;box-sizing:border-box;border:1.3px solid #9fc0e8;border-radius:6px;background:#dfe9fa;box-shadow:0 1px 2px rgba(0,0,0,0.12)"></div><div style="position:absolute;left:27px;top:243.5px;width:644.5px;height:102.5px;box-sizing:border-box;border:1.3px solid #9fc0e8;border-radius:6px;background:#dfe9fa;box-shadow:0 1px 2px rgba(0,0,0,0.12)"></div><div style="position:absolute;left:35.5px;top:362px;width:643px;height:102px;box-sizing:border-box;border:1px solid #cfcfcf;border-radius:6px;background:#fff;box-shadow:0 1px 2px rgba(0,0,0,0.15)"></div><div style="position:absolute;left:47.85px;top:25.00px;width:41.91px;font-size:16px;line-height:16px;font-weight:700;color:#57ad38;letter-spacing:0.200px;white-space:nowrap;z-index:1;transform:scaleX(1.1500);transform-origin:left;">Chris</div><div style="position:absolute;left:49.00px;top:58.00px;width:543.52px;font-size:16.5px;line-height:16.5px;font-weight:400;color:#111;letter-spacing:0.100px;white-space:nowrap;z-index:1;transform:scaleX(1.0978);transform-origin:left;">Wait, I&#x27;ll check it down. We should also check the clustering load balance.</div><div style="position:absolute;left:621.48px;top:85.00px;width:43.77px;font-size:11px;line-height:11px;font-weight:400;color:#555;letter-spacing:0.400px;white-space:nowrap;z-index:1;transform:scaleX(1.1047);transform-origin:right;">4:17 PM</div><div style="position:absolute;left:609.89px;top:143.00px;width:48.12px;font-size:16px;line-height:16px;font-weight:700;color:#3a77c0;letter-spacing:0.200px;white-space:nowrap;z-index:1;transform:scaleX(1.1702);transform-origin:right;">admin</div><div style="position:absolute;left:430.08px;top:176.00px;width:227.80px;font-size:16.5px;line-height:16.5px;font-weight:400;color:#111;letter-spacing:0.100px;white-space:nowrap;z-index:1;transform:scaleX(1.0973);transform-origin:right;">Is the secondary server is up ?</div><div style="position:absolute;left:613.79px;top:202.00px;width:43.77px;font-size:11px;line-height:11px;font-weight:400;color:#555;letter-spacing:0.400px;white-space:nowrap;z-index:1;transform:scaleX(1.1163);transform-origin:right;">4:16 PM</div><div style="position:absolute;left:609.89px;top:261.00px;width:48.12px;font-size:16px;line-height:16px;font-weight:700;color:#3a77c0;letter-spacing:0.200px;white-space:nowrap;z-index:1;transform:scaleX(1.1702);transform-origin:right;">admin</div><div style="position:absolute;left:509.80px;top:294.00px;width:147.92px;font-size:16.5px;line-height:16.5px;font-weight:400;color:#111;letter-spacing:0.100px;white-space:nowrap;z-index:1;transform:scaleX(1.1062);transform-origin:right;">He will join us soon.</div><div style="position:absolute;left:613.79px;top:320.00px;width:43.77px;font-size:11px;line-height:11px;font-weight:400;color:#555;letter-spacing:0.400px;white-space:nowrap;z-index:1;transform:scaleX(1.1163);transform-origin:right;">4:16 PM</div><div style="position:absolute;left:47.85px;top:379.00px;width:41.91px;font-size:16px;line-height:16px;font-weight:700;color:#57ad38;letter-spacing:0.200px;white-space:nowrap;z-index:1;transform:scaleX(1.1500);transform-origin:left;">Chris</div><div style="position:absolute;left:47.92px;top:411.00px;width:299.34px;font-size:16.5px;line-height:16.5px;font-weight:400;color:#111;letter-spacing:0.100px;white-space:nowrap;z-index:1;transform:scaleX(1.0805);transform-origin:left;">Hello. Did Steve has joined the session?</div><div style="position:absolute;left:621.48px;top:438.00px;width:43.77px;font-size:11px;line-height:11px;font-weight:400;color:#555;letter-spacing:0.400px;white-space:nowrap;z-index:1;transform:scaleX(1.1047);transform-origin:right;">4:15 PM</div></div>
<div style="position:absolute;left:795.5px;top:865.5px;width:55px;height:36px;box-sizing:border-box;border:2px solid #4f8bd6;border-radius:3px;background:#e0eafa;z-index:12"></div>
<svg style="position:absolute;left:0;top:0;z-index:20" width="1860" height="1038">
<path d="M1650 382.5 L1184 451" stroke="#f4101e" stroke-width="7.5" fill="none"/>
<path d="M1162.5 453.8 L1181.7 435 L1187.5 467.7 Z" fill="#f4101e"/>
</svg>
<div style="position:absolute;left:17.72px;top:28.00px;width:265.89px;font-size:23.5px;line-height:23.5px;font-weight:700;color:#fff;letter-spacing:0.300px;white-space:nowrap;z-index:1;transform:scaleX(0.9830);transform-origin:left;-webkit-text-stroke:0">Password Manager Pro</div>
<div style="position:absolute;left:350.24px;top:28.00px;width:48.83px;font-size:18px;line-height:18px;font-weight:400;color:#fff;letter-spacing:0.200px;white-space:nowrap;z-index:1;transform:scaleX(1.0638);transform-origin:left;-webkit-text-stroke:0.45px #fff">Home</div>
<div style="position:absolute;left:436.27px;top:28.00px;width:87.84px;font-size:18px;line-height:18px;font-weight:400;color:#fff;letter-spacing:0.200px;white-space:nowrap;z-index:1;transform:scaleX(1.0256);transform-origin:left;-webkit-text-stroke:0.45px #fff">Resources</div>
<div style="position:absolute;left:560.30px;top:28.00px;width:52.03px;font-size:18px;line-height:18px;font-weight:400;color:#fff;letter-spacing:0.200px;white-space:nowrap;z-index:1;transform:scaleX(1.0784);transform-origin:left;-webkit-text-stroke:0.45px #fff">Admin</div>
<div style="position:absolute;left:651.10px;top:28.00px;width:42.03px;font-size:18px;line-height:18px;font-weight:400;color:#fff;letter-spacing:0.200px;white-space:nowrap;z-index:1;transform:scaleX(1.0833);transform-origin:left;-webkit-text-stroke:0.45px #fff">Audit</div>
<div style="position:absolute;left:730.53px;top:28.00px;width:64.44px;font-size:18px;line-height:18px;font-weight:400;color:#fff;letter-spacing:0.200px;white-space:nowrap;z-index:1;transform:scaleX(1.0651);transform-origin:left;-webkit-text-stroke:0.45px #fff">Reports</div>
<div style="position:absolute;left:833.27px;top:28.00px;width:72.66px;font-size:18px;line-height:18px;font-weight:400;color:#fff;letter-spacing:0.200px;white-space:nowrap;z-index:1;transform:scaleX(1.0282);transform-origin:left;-webkit-text-stroke:0.45px #fff">Personal</div>
<div style="position:absolute;left:943.23px;top:28.00px;width:43.03px;font-size:18px;line-height:18px;font-weight:400;color:#fff;letter-spacing:0.200px;white-space:nowrap;z-index:1;transform:scaleX(1.0683);transform-origin:left;-webkit-text-stroke:0.45px #fff">Links</div>
<div style="position:absolute;left:1479.58px;top:33.00px;width:58.23px;font-size:18px;line-height:18px;font-weight:400;color:#666;letter-spacing:0.200px;white-space:nowrap;z-index:1;transform:scaleX(1.0179);transform-origin:left;-webkit-text-stroke:0">Search</div>
<div style="position:absolute;left:110.00px;top:144.00px;width:111.31px;font-size:16px;line-height:16px;font-weight:400;color:#333;letter-spacing:0.200px;white-space:nowrap;z-index:1;transform:scaleX(1.0955);transform-origin:56.00px 50%;">Resource Audit</div>
<div style="position:absolute;left:339.75px;top:144.00px;width:75.81px;font-size:16px;line-height:16px;font-weight:400;color:#333;letter-spacing:0.200px;white-space:nowrap;z-index:1;transform:scaleX(1.1133);transform-origin:38.50px 50%;">User Audit</div>
<div style="position:absolute;left:553.25px;top:144.00px;width:74.94px;font-size:16px;line-height:16px;font-weight:400;color:#333;letter-spacing:0.200px;white-space:nowrap;z-index:1;transform:scaleX(1.1200);transform-origin:37.50px 50%;">Task Audit</div>
<div style="position:absolute;left:730.50px;top:144.00px;width:142.16px;font-size:16px;line-height:16px;font-weight:400;color:#000;letter-spacing:0.200px;white-space:nowrap;z-index:1;transform:scaleX(1.0638);transform-origin:71.50px 50%;">Recorded Sessions</div>
<div style="position:absolute;left:932.50px;top:144.00px;width:177.81px;font-size:16px;line-height:16px;font-weight:400;color:#333;letter-spacing:0.200px;white-space:nowrap;z-index:1;transform:scaleX(1.0791);transform-origin:88.50px 50%;">Active Remote Sessions</div>
<div style="position:absolute;left:52.46px;top:220.00px;width:168.28px;font-size:16px;line-height:16px;font-weight:400;color:#222;letter-spacing:0.200px;white-space:nowrap;z-index:1;transform:scaleX(1.0359);transform-origin:left;">Showing : 1 to 50 of 80</div>
<div style="position:absolute;left:49.84px;top:265.00px;width:93.28px;font-size:16px;line-height:16px;font-weight:700;color:#222;letter-spacing:0.200px;white-space:nowrap;z-index:1;transform:scaleX(1.1630);transform-origin:left;">Filter audits</div>
<div style="position:absolute;left:176.46px;top:265.00px;width:48.91px;font-size:16px;line-height:16px;font-weight:400;color:#222;letter-spacing:0.200px;white-space:nowrap;z-index:1;transform:scaleX(1.2447);transform-origin:left;">-- All --</div>
<div style="position:absolute;left:439.46px;top:269.00px;width:190.41px;font-size:16px;line-height:16px;font-weight:700;color:#111;letter-spacing:0.200px;white-space:nowrap;z-index:1;transform:scaleX(1.1436);transform-origin:left;">Manage Custom Filters :</div>
<div style="position:absolute;left:662.00px;top:269.00px;width:29.08px;font-size:16px;line-height:16px;font-weight:400;color:#1a5ea8;letter-spacing:0.200px;white-space:nowrap;z-index:1;transform:scaleX(1.0893);transform-origin:left;text-decoration:underline;text-decoration-skip-ink:none">Add</div>
<div style="position:absolute;left:705.38px;top:269.00px;width:4.36px;font-size:16px;line-height:16px;font-weight:400;color:#222;letter-spacing:0.200px;white-space:nowrap;z-index:1;transform:scaleX(1.1200);transform-origin:left;">|</div>
<div style="position:absolute;left:722.41px;top:269.00px;width:28.38px;font-size:16px;line-height:16px;font-weight:400;color:#222;letter-spacing:0.200px;white-space:nowrap;z-index:1;transform:scaleX(1.0926);transform-origin:left;">Edit</div>
<div style="position:absolute;left:766.88px;top:269.00px;width:4.36px;font-size:16px;line-height:16px;font-weight:400;color:#222;letter-spacing:0.200px;white-space:nowrap;z-index:1;transform:scaleX(1.1200);transform-origin:left;">|</div>
<div style="position:absolute;left:782.39px;top:269.00px;width:47.45px;font-size:16px;line-height:16px;font-weight:400;color:#222;letter-spacing:0.200px;white-space:nowrap;z-index:1;transform:scaleX(1.1087);transform-origin:left;">Delete</div>
<div style="position:absolute;left:687.01px;top:220.00px;width:46.02px;font-size:15.5px;line-height:15.5px;font-weight:400;color:#222;letter-spacing:0.200px;white-space:nowrap;z-index:1;transform:scaleX(0.9909);transform-origin:left;">Page :</div>
<div style="position:absolute;left:738.73px;top:220.00px;width:19.55px;font-size:15.5px;line-height:15.5px;font-weight:700;color:#222;letter-spacing:0.200px;white-space:nowrap;z-index:1;transform:scaleX(1.2722);transform-origin:left;">[1]</div>
<div style="position:absolute;left:769.88px;top:220.00px;width:8.83px;font-size:15.5px;line-height:15.5px;font-weight:400;color:#1a5ea8;letter-spacing:0.200px;white-space:nowrap;z-index:1;transform:scaleX(1.1200);transform-origin:left;">2</div>
<div style="position:absolute;left:785.88px;top:220.00px;width:4.23px;font-size:15.5px;line-height:15.5px;font-weight:400;color:#222;letter-spacing:0.200px;white-space:nowrap;z-index:1;transform:scaleX(1.1200);transform-origin:left;">|</div>
<div style="position:absolute;left:1561.30px;top:220.00px;width:110.44px;font-size:15.5px;line-height:15.5px;font-weight:400;color:#222;letter-spacing:0.200px;white-space:nowrap;z-index:1;transform:scaleX(1.0413);transform-origin:left;">View per page :</div>
<div style="position:absolute;left:1681.74px;top:220.00px;width:17.66px;font-size:15.5px;line-height:15.5px;font-weight:400;color:#1a5ea8;letter-spacing:0.200px;white-space:nowrap;z-index:1;transform:scaleX(1.0625);transform-origin:left;">25</div>
<div style="position:absolute;left:1705.97px;top:220.00px;width:28.38px;font-size:15.5px;line-height:15.5px;font-weight:700;color:#111;letter-spacing:0.200px;white-space:nowrap;z-index:1;transform:scaleX(1.2296);transform-origin:left;">[50]</div>
<div style="position:absolute;left:1747.59px;top:220.00px;width:17.66px;font-size:15.5px;line-height:15.5px;font-weight:400;color:#1a5ea8;letter-spacing:0.200px;white-space:nowrap;z-index:1;transform:scaleX(1.0125);transform-origin:left;">75</div>
<div style="position:absolute;left:1770.96px;top:220.00px;width:26.47px;font-size:15.5px;line-height:15.5px;font-weight:400;color:#1a5ea8;letter-spacing:0.200px;white-space:nowrap;z-index:1;transform:scaleX(1.0360);transform-origin:left;">100</div>
<div style="position:absolute;left:1378.40px;top:256.00px;width:245.06px;font-size:18px;line-height:18px;font-weight:400;color:#0f58a4;letter-spacing:0.200px;white-space:nowrap;z-index:1;transform:scaleX(1.0307);transform-origin:left;text-decoration:underline;text-decoration-skip-ink:none;-webkit-text-stroke:0.1px #0f58a4">Troubleshoot Playback Issues</div>
<div style="position:absolute;left:1670.00px;top:259.00px;width:95.11px;font-size:16px;line-height:16px;font-weight:400;color:#0c4a92;letter-spacing:0.200px;white-space:nowrap;z-index:1;transform:scaleX(1.1053);transform-origin:left;">Audit Actions</div>
<div style="position:absolute;left:51.83px;top:320.00px;width:118.20px;font-size:16px;line-height:16px;font-weight:400;color:#111;letter-spacing:0.200px;white-space:nowrap;z-index:1;transform:scaleX(1.0690);transform-origin:left;">Resource Name</div>
<div style="position:absolute;left:271.91px;top:320.00px;width:97.56px;font-size:16px;line-height:16px;font-weight:400;color:#111;letter-spacing:0.200px;white-space:nowrap;z-index:1;transform:scaleX(1.0938);transform-origin:left;">User Account</div>
<div style="position:absolute;left:467.90px;top:320.00px;width:92.03px;font-size:16px;line-height:16px;font-weight:400;color:#111;letter-spacing:0.200px;white-space:nowrap;z-index:1;transform:scaleX(1.0989);transform-origin:left;">Operated By</div>
<div style="position:absolute;left:656.91px;top:320.00px;width:79.09px;font-size:16px;line-height:16px;font-weight:400;color:#111;letter-spacing:0.200px;white-space:nowrap;z-index:1;transform:scaleX(1.0897);transform-origin:left;">IP Address</div>
<div style="position:absolute;left:972.36px;top:322.00px;width:46.56px;font-size:16px;line-height:16px;font-weight:400;color:#111;letter-spacing:0.200px;white-space:nowrap;z-index:1;transform:scaleX(1.1444);transform-origin:left;">Status</div>
<div style="position:absolute;left:1060.50px;top:320.00px;width:87.66px;font-size:16px;line-height:16px;font-weight:400;color:#111;letter-spacing:0.200px;white-space:nowrap;z-index:1;transform:scaleX(1.1149);transform-origin:left;">Time Stamp</div>
<div style="position:absolute;left:1310.93px;top:320.00px;width:56.36px;font-size:16px;line-height:16px;font-weight:400;color:#111;letter-spacing:0.200px;white-space:nowrap;z-index:1;transform:scaleX(1.0741);transform-origin:left;">Reason</div>
<div style="position:absolute;left:1573.94px;top:322.00px;width:31.94px;font-size:16px;line-height:16px;font-weight:400;color:#111;letter-spacing:0.200px;white-space:nowrap;z-index:1;transform:scaleX(1.0645);transform-origin:left;">Play</div>
<div style="position:absolute;left:1630.42px;top:322.00px;width:66.55px;font-size:16px;line-height:16px;font-weight:400;color:#111;letter-spacing:0.200px;white-space:nowrap;z-index:1;transform:scaleX(1.0769);transform-origin:left;">Chat Log</div>
<div style="position:absolute;left:53.80px;top:371.00px;width:98.02px;font-size:16.5px;line-height:16.5px;font-weight:400;color:#111;letter-spacing:0.100px;white-space:nowrap;z-index:1;transform:scaleX(1.0680);transform-origin:left;">Western_sub</div>
<div style="position:absolute;left:273.35px;top:371.00px;width:43.62px;font-size:16.5px;line-height:16.5px;font-weight:400;color:#111;letter-spacing:0.100px;white-space:nowrap;z-index:1;transform:scaleX(1.0548);transform-origin:left;">Nolan</div>
<div style="position:absolute;left:469.50px;top:371.00px;width:45.45px;font-size:16.5px;line-height:16.5px;font-weight:400;color:#111;letter-spacing:0.100px;white-space:nowrap;z-index:1;transform:scaleX(1.1045);transform-origin:left;">admin</div>
<div style="position:absolute;left:658.92px;top:371.00px;width:66.03px;font-size:16.5px;line-height:16.5px;font-weight:400;color:#111;letter-spacing:0.100px;white-space:nowrap;z-index:1;transform:scaleX(1.0769);transform-origin:left;">localhost</div>
<div style="position:absolute;left:973.78px;top:371.00px;width:63.06px;font-size:16.5px;line-height:16.5px;font-weight:400;color:#111;letter-spacing:0.100px;white-space:nowrap;z-index:1;transform:scaleX(1.0242);transform-origin:left;">Success</div>
<div style="position:absolute;left:1061.50px;top:371.00px;width:173.34px;font-size:16.5px;line-height:16.5px;font-weight:400;color:#111;letter-spacing:0.100px;white-space:nowrap;z-index:1;transform:scaleX(1.1105);transform-origin:left;">Aug 12, 2015 11:34 AM</div>
<div style="position:absolute;left:1312.51px;top:371.00px;width:184.00px;font-size:16.5px;line-height:16.5px;font-weight:400;color:#111;letter-spacing:0.100px;white-space:nowrap;z-index:1;transform:scaleX(1.0907);transform-origin:left;">Retrieved by SSH auto...</div>
<div style="position:absolute;left:52.67px;top:419.00px;width:64.91px;font-size:16.5px;line-height:16.5px;font-weight:400;color:#111;letter-spacing:0.100px;white-space:nowrap;z-index:1;transform:scaleX(1.1286);transform-origin:left;">pmp-2k3</div>
<div style="position:absolute;left:274.40px;top:419.00px;width:98.50px;font-size:16.5px;line-height:16.5px;font-weight:400;color:#111;letter-spacing:0.100px;white-space:nowrap;z-index:1;transform:scaleX(1.1061);transform-origin:left;">Administrator</div>
<div style="position:absolute;left:469.50px;top:419.00px;width:45.45px;font-size:16.5px;line-height:16.5px;font-weight:400;color:#111;letter-spacing:0.100px;white-space:nowrap;z-index:1;transform:scaleX(1.1045);transform-origin:left;">admin</div>
<div style="position:absolute;left:658.92px;top:419.00px;width:66.03px;font-size:16.5px;line-height:16.5px;font-weight:400;color:#111;letter-spacing:0.100px;white-space:nowrap;z-index:1;transform:scaleX(1.0769);transform-origin:left;">localhost</div>
<div style="position:absolute;left:973.78px;top:419.00px;width:63.06px;font-size:16.5px;line-height:16.5px;font-weight:400;color:#111;letter-spacing:0.100px;white-space:nowrap;z-index:1;transform:scaleX(1.0242);transform-origin:left;">Success</div>
<div style="position:absolute;left:1061.50px;top:419.00px;width:173.34px;font-size:16.5px;line-height:16.5px;font-weight:400;color:#111;letter-spacing:0.100px;white-space:nowrap;z-index:1;transform:scaleX(1.1105);transform-origin:left;">Aug 12, 2015 11:32 AM</div>
<div style="position:absolute;left:1312.51px;top:419.00px;width:184.89px;font-size:16.5px;line-height:16.5px;font-weight:400;color:#111;letter-spacing:0.100px;white-space:nowrap;z-index:1;transform:scaleX(1.0929);transform-origin:left;">Retrieved by Windows ...</div>
<div style="position:absolute;left:53.80px;top:467.00px;width:98.02px;font-size:16.5px;line-height:16.5px;font-weight:400;color:#111;letter-spacing:0.100px;white-space:nowrap;z-index:1;transform:scaleX(1.0680);transform-origin:left;">Western_sub</div>
<div style="position:absolute;left:273.33px;top:467.00px;width:49.20px;font-size:16.5px;line-height:16.5px;font-weight:400;color:#111;letter-spacing:0.100px;white-space:nowrap;z-index:1;transform:scaleX(1.0667);transform-origin:left;">Parker</div>
<div style="position:absolute;left:469.50px;top:467.00px;width:45.45px;font-size:16.5px;line-height:16.5px;font-weight:400;color:#111;letter-spacing:0.100px;white-space:nowrap;z-index:1;transform:scaleX(1.1045);transform-origin:left;">admin</div>
<div style="position:absolute;left:658.92px;top:467.00px;width:66.03px;font-size:16.5px;line-height:16.5px;font-weight:400;color:#111;letter-spacing:0.100px;white-space:nowrap;z-index:1;transform:scaleX(1.0769);transform-origin:left;">localhost</div>
<div style="position:absolute;left:973.78px;top:467.00px;width:63.06px;font-size:16.5px;line-height:16.5px;font-weight:400;color:#111;letter-spacing:0.100px;white-space:nowrap;z-index:1;transform:scaleX(1.0242);transform-origin:left;">Success</div>
<div style="position:absolute;left:1061.50px;top:467.00px;width:173.34px;font-size:16.5px;line-height:16.5px;font-weight:400;color:#111;letter-spacing:0.100px;white-space:nowrap;z-index:1;transform:scaleX(1.1105);transform-origin:left;">Aug 12, 2015 11:32 AM</div>
<div style="position:absolute;left:1312.51px;top:467.00px;width:184.00px;font-size:16.5px;line-height:16.5px;font-weight:400;color:#111;letter-spacing:0.100px;white-space:nowrap;z-index:1;transform:scaleX(1.0907);transform-origin:left;">Retrieved by SSH auto...</div>
<div style="position:absolute;left:52.72px;top:515.00px;width:98.34px;font-size:16.5px;line-height:16.5px;font-weight:400;color:#111;letter-spacing:0.100px;white-space:nowrap;z-index:1;transform:scaleX(1.0773);transform-origin:left;">Nothern_Sub</div>
<div style="position:absolute;left:273.26px;top:515.00px;width:28.84px;font-size:16.5px;line-height:16.5px;font-weight:400;color:#111;letter-spacing:0.100px;white-space:nowrap;z-index:1;transform:scaleX(1.1429);transform-origin:left;">root</div>
<div style="position:absolute;left:469.50px;top:515.00px;width:45.45px;font-size:16.5px;line-height:16.5px;font-weight:400;color:#111;letter-spacing:0.100px;white-space:nowrap;z-index:1;transform:scaleX(1.1045);transform-origin:left;">admin</div>
<div style="position:absolute;left:658.92px;top:515.00px;width:66.03px;font-size:16.5px;line-height:16.5px;font-weight:400;color:#111;letter-spacing:0.100px;white-space:nowrap;z-index:1;transform:scaleX(1.0769);transform-origin:left;">localhost</div>
<div style="position:absolute;left:973.78px;top:515.00px;width:63.06px;font-size:16.5px;line-height:16.5px;font-weight:400;color:#111;letter-spacing:0.100px;white-space:nowrap;z-index:1;transform:scaleX(1.0242);transform-origin:left;">Success</div>
<div style="position:absolute;left:1061.50px;top:515.00px;width:173.34px;font-size:16.5px;line-height:16.5px;font-weight:400;color:#111;letter-spacing:0.100px;white-space:nowrap;z-index:1;transform:scaleX(1.1105);transform-origin:left;">Aug 12, 2015 11:32 AM</div>
<div style="position:absolute;left:1312.51px;top:515.00px;width:184.00px;font-size:16.5px;line-height:16.5px;font-weight:400;color:#111;letter-spacing:0.100px;white-space:nowrap;z-index:1;transform:scaleX(1.0907);transform-origin:left;">Retrieved by SSH auto...</div>
<div style="position:absolute;left:53.80px;top:563.00px;width:98.02px;font-size:16.5px;line-height:16.5px;font-weight:400;color:#111;letter-spacing:0.100px;white-space:nowrap;z-index:1;transform:scaleX(1.0680);transform-origin:left;">Western_sub</div>
<div style="position:absolute;left:273.33px;top:563.00px;width:49.20px;font-size:16.5px;line-height:16.5px;font-weight:400;color:#111;letter-spacing:0.100px;white-space:nowrap;z-index:1;transform:scaleX(1.0667);transform-origin:left;">Parker</div>
<div style="position:absolute;left:469.50px;top:563.00px;width:45.45px;font-size:16.5px;line-height:16.5px;font-weight:400;color:#111;letter-spacing:0.100px;white-space:nowrap;z-index:1;transform:scaleX(1.1045);transform-origin:left;">admin</div>
<div style="position:absolute;left:658.92px;top:563.00px;width:66.03px;font-size:16.5px;line-height:16.5px;font-weight:400;color:#111;letter-spacing:0.100px;white-space:nowrap;z-index:1;transform:scaleX(1.0769);transform-origin:left;">localhost</div>
<div style="position:absolute;left:973.78px;top:563.00px;width:63.06px;font-size:16.5px;line-height:16.5px;font-weight:400;color:#111;letter-spacing:0.100px;white-space:nowrap;z-index:1;transform:scaleX(1.0242);transform-origin:left;">Success</div>
<div style="position:absolute;left:1061.50px;top:563.00px;width:173.34px;font-size:16.5px;line-height:16.5px;font-weight:400;color:#111;letter-spacing:0.100px;white-space:nowrap;z-index:1;transform:scaleX(1.1105);transform-origin:left;">Aug 12, 2015 11:32 AM</div>
<div style="position:absolute;left:1312.51px;top:563.00px;width:184.00px;font-size:16.5px;line-height:16.5px;font-weight:400;color:#111;letter-spacing:0.100px;white-space:nowrap;z-index:1;transform:scaleX(1.0907);transform-origin:left;">Retrieved by SSH auto...</div>
<div style="position:absolute;left:52.72px;top:611.00px;width:98.34px;font-size:16.5px;line-height:16.5px;font-weight:400;color:#111;letter-spacing:0.100px;white-space:nowrap;z-index:1;transform:scaleX(1.0773);transform-origin:left;">Nothern_Sub</div>
<div style="position:absolute;left:273.26px;top:611.00px;width:28.84px;font-size:16.5px;line-height:16.5px;font-weight:400;color:#111;letter-spacing:0.100px;white-space:nowrap;z-index:1;transform:scaleX(1.1429);transform-origin:left;">root</div>
<div style="position:absolute;left:469.50px;top:611.00px;width:45.45px;font-size:16.5px;line-height:16.5px;font-weight:400;color:#111;letter-spacing:0.100px;white-space:nowrap;z-index:1;transform:scaleX(1.1045);transform-origin:left;">admin</div>
<div style="position:absolute;left:658.92px;top:611.00px;width:66.03px;font-size:16.5px;line-height:16.5px;font-weight:400;color:#111;letter-spacing:0.100px;white-space:nowrap;z-index:1;transform:scaleX(1.0769);transform-origin:left;">localhost</div>
<div style="position:absolute;left:973.78px;top:611.00px;width:63.06px;font-size:16.5px;line-height:16.5px;font-weight:400;color:#111;letter-spacing:0.100px;white-space:nowrap;z-index:1;transform:scaleX(1.0242);transform-origin:left;">Success</div>
<div style="position:absolute;left:1061.50px;top:611.00px;width:173.34px;font-size:16.5px;line-height:16.5px;font-weight:400;color:#111;letter-spacing:0.100px;white-space:nowrap;z-index:1;transform:scaleX(1.1105);transform-origin:left;">Aug 12, 2015 11:26 AM</div>
<div style="position:absolute;left:1312.51px;top:611.00px;width:184.00px;font-size:16.5px;line-height:16.5px;font-weight:400;color:#111;letter-spacing:0.100px;white-space:nowrap;z-index:1;transform:scaleX(1.0907);transform-origin:left;">Retrieved by SSH auto...</div>
<div style="position:absolute;left:53.80px;top:659.00px;width:98.02px;font-size:16.5px;line-height:16.5px;font-weight:400;color:#111;letter-spacing:0.100px;white-space:nowrap;z-index:1;transform:scaleX(1.0680);transform-origin:left;">Western_sub</div>
<div style="position:absolute;left:273.33px;top:659.00px;width:49.20px;font-size:16.5px;line-height:16.5px;font-weight:400;color:#111;letter-spacing:0.100px;white-space:nowrap;z-index:1;transform:scaleX(1.0667);transform-origin:left;">Parker</div>
<div style="position:absolute;left:469.50px;top:659.00px;width:45.45px;font-size:16.5px;line-height:16.5px;font-weight:400;color:#111;letter-spacing:0.100px;white-space:nowrap;z-index:1;transform:scaleX(1.1045);transform-origin:left;">admin</div>
<div style="position:absolute;left:658.92px;top:659.00px;width:66.03px;font-size:16.5px;line-height:16.5px;font-weight:400;color:#111;letter-spacing:0.100px;white-space:nowrap;z-index:1;transform:scaleX(1.0769);transform-origin:left;">localhost</div>
<div style="position:absolute;left:973.78px;top:659.00px;width:63.06px;font-size:16.5px;line-height:16.5px;font-weight:400;color:#111;letter-spacing:0.100px;white-space:nowrap;z-index:1;transform:scaleX(1.0242);transform-origin:left;">Success</div>
<div style="position:absolute;left:1061.50px;top:659.00px;width:173.34px;font-size:16.5px;line-height:16.5px;font-weight:400;color:#111;letter-spacing:0.100px;white-space:nowrap;z-index:1;transform:scaleX(1.1105);transform-origin:left;">Aug 12, 2015 11:22 AM</div>
<div style="position:absolute;left:1312.51px;top:659.00px;width:184.00px;font-size:16.5px;line-height:16.5px;font-weight:400;color:#111;letter-spacing:0.100px;white-space:nowrap;z-index:1;transform:scaleX(1.0907);transform-origin:left;">Retrieved by SSH auto...</div>
<div style="position:absolute;left:52.65px;top:707.00px;width:34.44px;font-size:16.5px;line-height:16.5px;font-weight:400;color:#111;letter-spacing:0.100px;white-space:nowrap;z-index:1;transform:scaleX(1.1515);transform-origin:left;">linux</div>
<div style="position:absolute;left:274.40px;top:707.00px;width:27.00px;font-size:16.5px;line-height:16.5px;font-weight:400;color:#111;letter-spacing:0.100px;white-space:nowrap;z-index:1;transform:scaleX(1.1296);transform-origin:left;">test</div>
<div style="position:absolute;left:469.50px;top:707.00px;width:45.45px;font-size:16.5px;line-height:16.5px;font-weight:400;color:#111;letter-spacing:0.100px;white-space:nowrap;z-index:1;transform:scaleX(1.1045);transform-origin:left;">admin</div>
<div style="position:absolute;left:658.92px;top:707.00px;width:66.03px;font-size:16.5px;line-height:16.5px;font-weight:400;color:#111;letter-spacing:0.100px;white-space:nowrap;z-index:1;transform:scaleX(1.0769);transform-origin:left;">localhost</div>
<div style="position:absolute;left:973.78px;top:707.00px;width:63.06px;font-size:16.5px;line-height:16.5px;font-weight:400;color:#111;letter-spacing:0.100px;white-space:nowrap;z-index:1;transform:scaleX(1.0242);transform-origin:left;">Success</div>
<div style="position:absolute;left:1061.50px;top:707.00px;width:175.48px;font-size:16.5px;line-height:16.5px;font-weight:400;color:#111;letter-spacing:0.100px;white-space:nowrap;z-index:1;transform:scaleX(1.0977);transform-origin:left;">Aug 12, 2015 09:19 PM</div>
<div style="position:absolute;left:1312.49px;top:707.00px;width:170.86px;font-size:16.5px;line-height:16.5px;font-weight:400;color:#111;letter-spacing:0.100px;white-space:nowrap;z-index:1;transform:scaleX(1.1107);transform-origin:left;">Retrieved by Telnet a...</div>
<div style="position:absolute;left:52.65px;top:755.00px;width:34.44px;font-size:16.5px;line-height:16.5px;font-weight:400;color:#111;letter-spacing:0.100px;white-space:nowrap;z-index:1;transform:scaleX(1.1515);transform-origin:left;">linux</div>
<div style="position:absolute;left:274.40px;top:755.00px;width:27.00px;font-size:16.5px;line-height:16.5px;font-weight:400;color:#111;letter-spacing:0.100px;white-space:nowrap;z-index:1;transform:scaleX(1.1296);transform-origin:left;">test</div>
<div style="position:absolute;left:469.50px;top:755.00px;width:45.45px;font-size:16.5px;line-height:16.5px;font-weight:400;color:#111;letter-spacing:0.100px;white-space:nowrap;z-index:1;transform:scaleX(1.1045);transform-origin:left;">admin</div>
<div style="position:absolute;left:658.92px;top:755.00px;width:66.03px;font-size:16.5px;line-height:16.5px;font-weight:400;color:#111;letter-spacing:0.100px;white-space:nowrap;z-index:1;transform:scaleX(1.0769);transform-origin:left;">localhost</div>
<div style="position:absolute;left:973.78px;top:755.00px;width:63.06px;font-size:16.5px;line-height:16.5px;font-weight:400;color:#111;letter-spacing:0.100px;white-space:nowrap;z-index:1;transform:scaleX(1.0242);transform-origin:left;">Success</div>
<div style="position:absolute;left:1061.50px;top:755.00px;width:175.48px;font-size:16.5px;line-height:16.5px;font-weight:400;color:#111;letter-spacing:0.100px;white-space:nowrap;z-index:1;transform:scaleX(1.0977);transform-origin:left;">Aug 12, 2015 09:19 PM</div>
<div style="position:absolute;left:1312.51px;top:755.00px;width:184.00px;font-size:16.5px;line-height:16.5px;font-weight:400;color:#111;letter-spacing:0.100px;white-space:nowrap;z-index:1;transform:scaleX(1.0907);transform-origin:left;">Retrieved by SSH auto...</div>
<div style="position:absolute;left:52.67px;top:803.00px;width:64.91px;font-size:16.5px;line-height:16.5px;font-weight:400;color:#111;letter-spacing:0.100px;white-space:nowrap;z-index:1;transform:scaleX(1.1286);transform-origin:left;">pmp-2k3</div>
<div style="position:absolute;left:274.40px;top:803.00px;width:98.50px;font-size:16.5px;line-height:16.5px;font-weight:400;color:#111;letter-spacing:0.100px;white-space:nowrap;z-index:1;transform:scaleX(1.1061);transform-origin:left;">Administrator</div>
<div style="position:absolute;left:469.50px;top:803.00px;width:45.45px;font-size:16.5px;line-height:16.5px;font-weight:400;color:#111;letter-spacing:0.100px;white-space:nowrap;z-index:1;transform:scaleX(1.1045);transform-origin:left;">admin</div>
<div style="position:absolute;left:658.92px;top:803.00px;width:66.03px;font-size:16.5px;line-height:16.5px;font-weight:400;color:#111;letter-spacing:0.100px;white-space:nowrap;z-index:1;transform:scaleX(1.0769);transform-origin:left;">localhost</div>
<div style="position:absolute;left:973.78px;top:803.00px;width:63.06px;font-size:16.5px;line-height:16.5px;font-weight:400;color:#111;letter-spacing:0.100px;white-space:nowrap;z-index:1;transform:scaleX(1.0242);transform-origin:left;">Success</div>
<div style="position:absolute;left:1061.50px;top:803.00px;width:175.48px;font-size:16.5px;line-height:16.5px;font-weight:400;color:#111;letter-spacing:0.100px;white-space:nowrap;z-index:1;transform:scaleX(1.0977);transform-origin:left;">Aug 12, 2015 09:19 PM</div>
<div style="position:absolute;left:1312.51px;top:803.00px;width:184.89px;font-size:16.5px;line-height:16.5px;font-weight:400;color:#111;letter-spacing:0.100px;white-space:nowrap;z-index:1;transform:scaleX(1.0929);transform-origin:left;">Retrieved by Windows ...</div>
<div style="position:absolute;left:52.67px;top:851.00px;width:64.91px;font-size:16.5px;line-height:16.5px;font-weight:400;color:#111;letter-spacing:0.100px;white-space:nowrap;z-index:1;transform:scaleX(1.1286);transform-origin:left;">pmp-2k3</div>
<div style="position:absolute;left:274.40px;top:851.00px;width:98.50px;font-size:16.5px;line-height:16.5px;font-weight:400;color:#111;letter-spacing:0.100px;white-space:nowrap;z-index:1;transform:scaleX(1.1061);transform-origin:left;">Administrator</div>
<div style="position:absolute;left:469.50px;top:851.00px;width:45.45px;font-size:16.5px;line-height:16.5px;font-weight:400;color:#111;letter-spacing:0.100px;white-space:nowrap;z-index:1;transform:scaleX(1.1045);transform-origin:left;">admin</div>
<div style="position:absolute;left:658.92px;top:851.00px;width:66.03px;font-size:16.5px;line-height:16.5px;font-weight:400;color:#111;letter-spacing:0.100px;white-space:nowrap;z-index:1;transform:scaleX(1.0769);transform-origin:left;">localhost</div>
<div style="position:absolute;left:973.78px;top:851.00px;width:63.06px;font-size:16.5px;line-height:16.5px;font-weight:400;color:#111;letter-spacing:0.100px;white-space:nowrap;z-index:1;transform:scaleX(1.0242);transform-origin:left;">Success</div>
<div style="position:absolute;left:1061.50px;top:851.00px;width:175.48px;font-size:16.5px;line-height:16.5px;font-weight:400;color:#111;letter-spacing:0.100px;white-space:nowrap;z-index:1;transform:scaleX(1.0977);transform-origin:left;">Aug 12, 2015 09:18 PM</div>
<div style="position:absolute;left:1312.51px;top:851.00px;width:184.89px;font-size:16.5px;line-height:16.5px;font-weight:400;color:#111;letter-spacing:0.100px;white-space:nowrap;z-index:1;transform:scaleX(1.0929);transform-origin:left;">Retrieved by Windows ...</div>
<div style="position:absolute;left:52.67px;top:899.00px;width:64.91px;font-size:16.5px;line-height:16.5px;font-weight:400;color:#111;letter-spacing:0.100px;white-space:nowrap;z-index:1;transform:scaleX(1.1286);transform-origin:left;">pmp-2k3</div>
<div style="position:absolute;left:274.40px;top:899.00px;width:98.50px;font-size:16.5px;line-height:16.5px;font-weight:400;color:#111;letter-spacing:0.100px;white-space:nowrap;z-index:1;transform:scaleX(1.1061);transform-origin:left;">Administrator</div>
<div style="position:absolute;left:469.50px;top:899.00px;width:45.45px;font-size:16.5px;line-height:16.5px;font-weight:400;color:#111;letter-spacing:0.100px;white-space:nowrap;z-index:1;transform:scaleX(1.1045);transform-origin:left;">admin</div>
<div style="position:absolute;left:658.92px;top:899.00px;width:66.03px;font-size:16.5px;line-height:16.5px;font-weight:400;color:#111;letter-spacing:0.100px;white-space:nowrap;z-index:1;transform:scaleX(1.0769);transform-origin:left;">localhost</div>
<div style="position:absolute;left:973.78px;top:899.00px;width:63.06px;font-size:16.5px;line-height:16.5px;font-weight:400;color:#111;letter-spacing:0.100px;white-space:nowrap;z-index:1;transform:scaleX(1.0242);transform-origin:left;">Success</div>
<div style="position:absolute;left:1061.50px;top:899.00px;width:175.48px;font-size:16.5px;line-height:16.5px;font-weight:400;color:#111;letter-spacing:0.100px;white-space:nowrap;z-index:1;transform:scaleX(1.0977);transform-origin:left;">Aug 12, 2015 09:18 PM</div>
<div style="position:absolute;left:1312.51px;top:899.00px;width:184.89px;font-size:16.5px;line-height:16.5px;font-weight:400;color:#111;letter-spacing:0.100px;white-space:nowrap;z-index:1;transform:scaleX(1.0929);transform-origin:left;">Retrieved by Windows ...</div>
<div style="position:absolute;left:52.65px;top:947.00px;width:34.44px;font-size:16.5px;line-height:16.5px;font-weight:400;color:#111;letter-spacing:0.100px;white-space:nowrap;z-index:1;transform:scaleX(1.1515);transform-origin:left;">linux</div>
<div style="position:absolute;left:274.40px;top:947.00px;width:27.00px;font-size:16.5px;line-height:16.5px;font-weight:400;color:#111;letter-spacing:0.100px;white-space:nowrap;z-index:1;transform:scaleX(1.1296);transform-origin:left;">test</div>
<div style="position:absolute;left:469.50px;top:947.00px;width:45.45px;font-size:16.5px;line-height:16.5px;font-weight:400;color:#111;letter-spacing:0.100px;white-space:nowrap;z-index:1;transform:scaleX(1.1045);transform-origin:left;">admin</div>
<div style="position:absolute;left:658.92px;top:947.00px;width:66.03px;font-size:16.5px;line-height:16.5px;font-weight:400;color:#111;letter-spacing:0.100px;white-space:nowrap;z-index:1;transform:scaleX(1.0769);transform-origin:left;">localhost</div>
<div style="position:absolute;left:973.78px;top:947.00px;width:63.06px;font-size:16.5px;line-height:16.5px;font-weight:400;color:#111;letter-spacing:0.100px;white-space:nowrap;z-index:1;transform:scaleX(1.0242);transform-origin:left;">Success</div>
<div style="position:absolute;left:1061.50px;top:947.00px;width:175.48px;font-size:16.5px;line-height:16.5px;font-weight:400;color:#111;letter-spacing:0.100px;white-space:nowrap;z-index:1;transform:scaleX(1.0977);transform-origin:left;">Aug 12, 2015 09:17 PM</div>
<div style="position:absolute;left:1312.51px;top:947.00px;width:184.00px;font-size:16.5px;line-height:16.5px;font-weight:400;color:#111;letter-spacing:0.100px;white-space:nowrap;z-index:1;transform:scaleX(1.0907);transform-origin:left;">Retrieved by SSH auto...</div>
<div style="position:absolute;left:52.65px;top:995.00px;width:34.44px;font-size:16.5px;line-height:16.5px;font-weight:400;color:#111;letter-spacing:0.100px;white-space:nowrap;z-index:1;transform:scaleX(1.1515);transform-origin:left;">linux</div>
<div style="position:absolute;left:274.40px;top:995.00px;width:27.00px;font-size:16.5px;line-height:16.5px;font-weight:400;color:#111;letter-spacing:0.100px;white-space:nowrap;z-index:1;transform:scaleX(1.1296);transform-origin:left;">test</div>
<div style="position:absolute;left:469.50px;top:995.00px;width:45.45px;font-size:16.5px;line-height:16.5px;font-weight:400;color:#111;letter-spacing:0.100px;white-space:nowrap;z-index:1;transform:scaleX(1.1045);transform-origin:left;">admin</div>
<div style="position:absolute;left:658.92px;top:995.00px;width:66.03px;font-size:16.5px;line-height:16.5px;font-weight:400;color:#111;letter-spacing:0.100px;white-space:nowrap;z-index:1;transform:scaleX(1.0769);transform-origin:left;">localhost</div>
<div style="position:absolute;left:973.78px;top:995.00px;width:63.06px;font-size:16.5px;line-height:16.5px;font-weight:400;color:#111;letter-spacing:0.100px;white-space:nowrap;z-index:1;transform:scaleX(1.0242);transform-origin:left;">Success</div>
<div style="position:absolute;left:1061.50px;top:995.00px;width:175.48px;font-size:16.5px;line-height:16.5px;font-weight:400;color:#111;letter-spacing:0.100px;white-space:nowrap;z-index:1;transform:scaleX(1.0977);transform-origin:left;">Aug 12, 2015 09:16 PM</div>
<div style="position:absolute;left:1312.51px;top:995.00px;width:184.00px;font-size:16.5px;line-height:16.5px;font-weight:400;color:#111;letter-spacing:0.100px;white-space:nowrap;z-index:1;transform:scaleX(1.0907);transform-origin:left;">Retrieved by SSH auto...</div>
<div style="position:absolute;left:484.65px;top:382.00px;width:74.66px;font-size:18px;line-height:18px;font-weight:400;color:#fff;letter-spacing:0.200px;white-space:nowrap;z-index:12;transform:scaleX(1.0507);transform-origin:left;">Chat Log</div>
<div style="position:absolute;left:806.83px;top:876.00px;width:26.11px;font-size:17px;line-height:17px;font-weight:700;color:#0d2d5e;letter-spacing:0.300px;white-space:nowrap;z-index:13;transform:scaleX(1.1667);transform-origin:left;">OK</div>
</body></html>
